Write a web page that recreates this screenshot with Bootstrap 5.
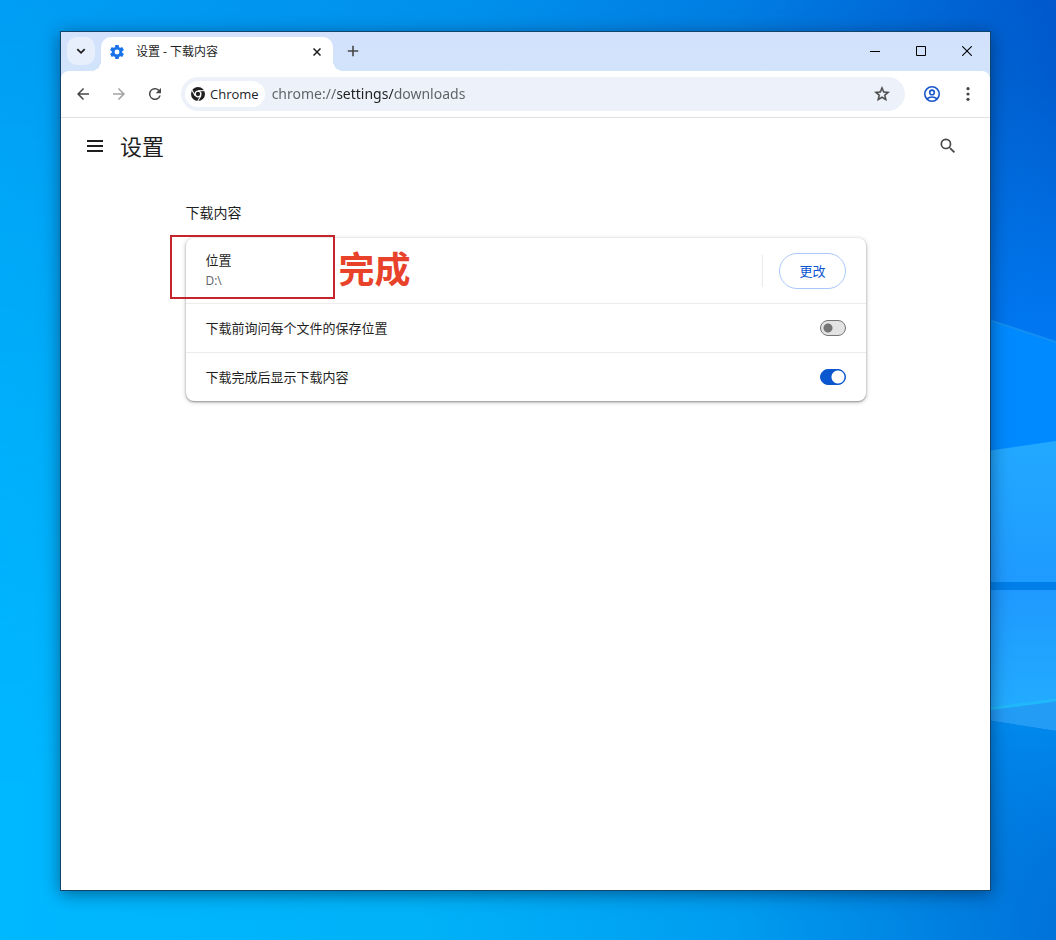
<!DOCTYPE html>
<html lang="zh-CN">
<head>
<meta charset="utf-8">
<meta name="viewport" content="width=device-width, initial-scale=1">
<title>设置 - 下载内容</title>
<link href="https://cdn.jsdelivr.net/npm/bootstrap@5.3.0/dist/css/bootstrap.min.css" rel="stylesheet">
<style>
  body { font-family: "Open Sans", "Noto Sans CJK SC", sans-serif; font-size: 13px; line-height: 20px; color: #1f1f1f; }
  svg { display: block; flex: none; }
  .desktop { padding: 31px 65px 49px 60px; isolation: isolate; }
  .wallpaper { inset: 0; z-index: -1; }
  .app-window { border: 1px solid #10466c; box-shadow: 0 3px 16px rgba(0, 20, 50, .5); }

  .titlebar { height: 39px; padding-left: 6px; background: linear-gradient(#d4e1fc, #d1e4fb); }
  .icon-btn { --bs-btn-padding-x: 0; --bs-btn-padding-y: 0; --bs-btn-border-width: 0; --bs-btn-border-radius: 18px;
    --bs-btn-hover-bg: #e9eef6; display: flex; align-items: center; justify-content: center; flex: none;
    width: 36px; height: 36px; color: #474747; }
  .tab-search { width: 28px; height: 28px; margin: 5px 6px 0 0; border-radius: 10px; background: #e7effd; color: #1f1f1f; }
  .browser-tab { width: 232px; height: 34px; padding: 0 8px 5px 9px; border-radius: 10px 10px 0 0; background: #fff; font-size: 12px; color: #1f1f1f; }
  .browser-tab::before, .browser-tab::after { content: ""; position: absolute; bottom: 0; width: 10px; height: 10px; }
  .browser-tab::before { right: 100%; background: radial-gradient(circle at 0 0, transparent 10px, #fff 10px); }
  .browser-tab::after { left: 100%; background: radial-gradient(circle at 100% 0, transparent 10px, #fff 10px); }
  .tab-close { width: 16px; height: 16px; color: #1f1f1f; }
  .new-tab { width: 28px; height: 28px; margin: 5px 0 0 6px; }
  .caption-btn { width: 46px; height: 38px; border-radius: 0; color: #000; }

  .toolbar-wrap { background: #d1e4fb; }
  .toolbar { height: 47px; padding: 0 4px; border-bottom: 1px solid #dfe1e5; border-radius: 8px 8px 0 0; background: #fff; }
  .omnibox { height: 34px; margin: 0 9px 0 8px; padding: 0 5px 0 4px; border-radius: 17px; background: #edf1f9; }
  .site-chip { height: 26px; padding: 0 6px; border-radius: 13px; background: #fff; font-size: 13px; line-height: 26px; gap: 5px; }
  .omnibox input { border: 0; border-radius: 0; padding: 0; margin-left: 7px; min-width: 0; font-family: "Noto Sans", sans-serif; font-size: 14px; line-height: 24px;
    color: #474747; outline: 0;
    background: linear-gradient(90deg, #5c5f63 66px, #1f1f1f 66px 122px, #5c5f63 122px) text; -webkit-text-fill-color: transparent; }

  .page-head { height: 56px; padding: 0 24px 0 16px; }
  .page-head h1 { font-size: 22px; line-height: 32px; font-weight: 400; margin: 0 0 0 7px; color: #1f1f1f; }
  .settings-col { max-width: 680px; padding-top: 29px; }
  .settings-col h2 { font-size: 14px; line-height: 20px; font-weight: 400; margin: 0 0 15px; }
  .settings-card { border-radius: 8px; background: #fff; box-shadow: 0 1px 2px rgba(60, 64, 67, .5), 0 1px 4px 1px rgba(60, 64, 67, .18); }
  .setting-row { min-height: 49px; padding: 0 20px; border-top: 1px solid #ededed; }
  .setting-row:first-child { min-height: 65px; border-top: 0; }
  .path-text { font-size: 12px; line-height: 22px; color: #5f6368; }
  .row-divider { width: 1px; height: 32px; margin-right: 16px; background: #e8eaed; }
  .change-btn { --bs-btn-color: #0b57d0; --bs-btn-border-color: #a8c7fa; --bs-btn-hover-bg: #f0f5fe; --bs-btn-hover-color: #0b57d0;
    --bs-btn-font-size: 13px; --bs-btn-line-height: 20px; --bs-btn-padding-y: 7px; --bs-btn-padding-x: 19px; }
  .toggle.form-check-input { width: 26px; height: 16px; margin: 0; border: 1px solid #767676; border-radius: 8px;
    background: #e3e3e3 radial-gradient(circle at 7px 7px, #757575 4px, transparent 5px); }
  .toggle.form-check-input:checked { border-color: #0b57d0;
    background: #0b57d0 radial-gradient(circle at 17px 7px, #fff 6px, transparent 7px); }

  .mark-box { left: -16px; top: -3px; width: 165px; height: 64px; border: 2px solid #c4242b; }
  .mark-label { left: 153px; top: 5px; font-size: 36px; line-height: 54px; font-weight: 700; color: #e8432a; }
</style>
</head>
<body>
<div class="desktop position-relative min-vh-100 d-flex">
  <svg class="wallpaper position-absolute w-100 h-100" viewBox="0 0 1056 940" preserveAspectRatio="none" aria-hidden="true">
    <defs>
      <linearGradient id="skyTop"><stop offset="0" stop-color="#009ef4"/><stop offset=".45" stop-color="#0090ec"/><stop offset=".7" stop-color="#007de2"/><stop offset=".88" stop-color="#0067d6"/><stop offset="1" stop-color="#0059cc"/></linearGradient>
      <linearGradient id="skyLow"><stop offset="0" stop-color="#00b8ff"/><stop offset=".4" stop-color="#00b2f8"/><stop offset=".7" stop-color="#009cf0"/><stop offset=".9" stop-color="#007fe0"/><stop offset="1" stop-color="#0072da"/></linearGradient>
      <linearGradient id="fade" x2="0" y2="1"><stop offset="0" stop-color="#000"/><stop offset=".4" stop-color="#999"/><stop offset=".85" stop-color="#fff"/></linearGradient>
      <linearGradient id="glow" x2="0" y2="1"><stop offset="0" stop-color="#0070e8" stop-opacity="0"/><stop offset="1" stop-color="#0078f2"/></linearGradient>
      <linearGradient id="paneA" x2="0" y2="1"><stop offset="0" stop-color="#22a9ff"/><stop offset="1" stop-color="#1f9aff"/></linearGradient>
      <linearGradient id="paneB" x2="0" y2="1"><stop offset="0" stop-color="#1f99ff"/><stop offset="1" stop-color="#22acff"/></linearGradient>
      <linearGradient id="floor" x2="0" y2="1"><stop offset="0" stop-color="#008aee"/><stop offset="1" stop-color="#0074da" stop-opacity="0"/></linearGradient>
      <mask id="lowMask"><rect width="1056" height="940" fill="url(#fade)"/></mask>
    </defs>
    <rect width="1056" height="940" fill="url(#skyTop)"/>
    <rect width="1056" height="940" fill="url(#skyLow)" mask="url(#lowMask)"/>
    <path d="M980 80h76v262l-76-25z" fill="url(#glow)"/>
    <path d="M980 317l76 25v100l-76 10z" fill="#008aff"/>
    <path d="M980 317l76 25" stroke="#128ff4" stroke-width="2"/>
    <path d="M980 452l76-11v141h-76z" fill="url(#paneA)"/>
    <path d="M980 582h76v8h-76z" fill="#007fe8"/>
    <path d="M980 590h76v110l-76 10z" fill="url(#paneB)"/>
    <path d="M980 710l76-10v31l-76-12z" fill="#239cf6"/>
    <path d="M980 710l76-10" stroke="#20b8fb" stroke-width="3"/>
    <path d="M980 719l76 12v209h-76z" fill="url(#floor)"/>
  </svg>

  <main class="app-window flex-fill d-flex flex-column bg-white">
    <div class="titlebar d-flex">
      <button class="btn icon-btn tab-search" aria-label="搜索标签页"><svg width="10" height="10" viewBox="0 0 10 10" fill="none" stroke="currentColor" stroke-width="1.800"><path d="M1.300 3.200 5 6.800l3.700-3.600"/></svg></button>
      <div class="browser-tab position-relative d-flex align-items-center align-self-end">
        <svg width="14" height="14" viewBox="2 2 20 20" fill="#1a73e8"><path d="M19.43 12.98c.04-.32.07-.64.07-.98s-.03-.66-.07-.98l2.11-1.65c.19-.15.24-.42.12-.64l-2-3.460c-.12-.22-.39-.3-.61-.22l-2.490 1c-.52-.4-1.080-.73-1.690-.98l-.38-2.650C14.460 2.180 14.250 2 14 2h-4c-.25 0-.46.18-.49.42l-.38 2.650c-.61.25-1.170.59-1.690.98l-2.490-1c-.23-.09-.49 0-.61.22l-2 3.460c-.13.22-.07.49.12.64l2.110 1.650c-.04.32-.07.65-.07.98s.03.66.07.98l-2.110 1.650c-.19.15-.24.42-.12.64l2 3.460c.12.22.39.3.61.22l2.490-1c.52.4 1.080.73 1.690.98l.38 2.650c.03.24.24.42.49.42h4c.25 0 .46-.18.49-.42l.38-2.650c.61-.25 1.170-.59 1.690-.98l2.490 1c.23.09.49 0 .61-.22l2-3.460c.12-.22.07-.49-.12-.64zM12 15.500A3.500 3.500 0 1 1 12 8.500a3.500 3.500 0 0 1 0 7z"/></svg>
        <span class="flex-fill ms-2 ps-1">设置 - 下载内容</span>
        <button class="btn icon-btn tab-close" aria-label="关闭标签页"><svg width="8" height="8" viewBox="0 0 8 8" stroke="currentColor" stroke-width="1.500"><path d="M.5.5l7 7M7.500.5l-7 7"/></svg></button>
      </div>
      <button class="btn icon-btn new-tab" aria-label="新标签页"><svg width="12" height="12" viewBox="0 0 12 12" stroke="currentColor" stroke-width="1.600"><path d="M6 .8v10.400M.8 6h10.400"/></svg></button>
      <div class="d-flex ms-auto">
        <button class="btn icon-btn caption-btn" aria-label="最小化"><svg width="10" height="10" viewBox="0 0 10 10"><path d="M0 5h10v1H0z"/></svg></button>
        <button class="btn icon-btn caption-btn" aria-label="最大化"><svg width="10" height="10" viewBox="0 0 10 10" fill="none" stroke="#000"><path d="M.5.5h9v9h-9z"/></svg></button>
        <button class="btn icon-btn caption-btn" aria-label="关闭"><svg width="10" height="10" viewBox="0 0 10 10" stroke="#000" stroke-width="1.100"><path d="M.2.2l9.600 9.600M9.800.2.2 9.800"/></svg></button>
      </div>
    </div>

    <div class="toolbar-wrap">
      <nav class="toolbar d-flex align-items-center">
        <button class="btn icon-btn" aria-label="后退"><svg width="18" height="18" viewBox="0 0 24 24" fill="currentColor"><path d="M20 11H7.830l5.590-5.590L12 4l-8 8 8 8 1.410-1.410L7.830 13H20z"/></svg></button>
        <button class="btn icon-btn opacity-50" aria-label="前进"><svg width="18" height="18" viewBox="0 0 24 24" fill="currentColor"><path d="m12 4-1.410 1.410L16.170 11H4v2h12.170l-5.580 5.590L12 20l8-8z"/></svg></button>
        <button class="btn icon-btn" aria-label="重新加载"><svg width="18" height="18" viewBox="0 0 24 24" fill="currentColor"><path d="M17.650 6.350A8 8 0 1 0 19.730 14h-2.080A6 6 0 1 1 12 6c1.660 0 3.140.69 4.220 1.780L13 11h7V4z"/></svg></button>
        <div class="omnibox flex-fill d-flex align-items-center">
          <button class="btn site-chip d-flex align-items-center border-0" type="button">
            <svg width="14" height="14" viewBox="0 0 24 24"><circle cx="12" cy="12" r="12" fill="#1f1f1f"/><g stroke="#fff" stroke-width="1.800" fill="none"><path d="M12 6.300h11"/><path d="M12 6.300h11" transform="rotate(120 12 12)"/><path d="M12 6.300h11" transform="rotate(240 12 12)"/></g><circle cx="12" cy="12" r="4.900" fill="#1f1f1f" stroke="#fff" stroke-width="2.400"/></svg>
            <span>Chrome</span>
          </button>
          <input class="flex-fill" type="text" value="chrome://settings/downloads" aria-label="地址和搜索栏">
          <button class="btn icon-btn" aria-label="为此标签页添加书签"><svg width="18" height="18" viewBox="0 0 24 24" fill="currentColor" stroke="currentColor" stroke-width=".5"><path d="m22 9.240-7.190-.62L12 2 9.190 8.630 2 9.240l5.460 4.730L5.820 21 12 17.270 18.180 21l-1.630-7.030zM12 15.400l-3.760 2.270 1-4.280-3.320-2.880 4.380-.38L12 6.100l1.710 4.040 4.380.38-3.320 2.880 1 4.280z"/></svg></button>
        </div>
        <button class="btn icon-btn" aria-label="个人资料"><svg width="18" height="18" viewBox="0 0 18 18" fill="none" stroke="#1a56c8" stroke-width="1.600"><circle cx="9" cy="9" r="7.200"/><circle cx="9" cy="7.400" r="2.300"/><path d="M3.800 13.800c3-2.300 7.400-2.300 10.400 0"/></svg></button>
        <button class="btn icon-btn" aria-label="更多"><svg width="4" height="14" viewBox="0 0 4 14" fill="currentColor"><circle cx="2" cy="1.700" r="1.600"/><circle cx="2" cy="7" r="1.600"/><circle cx="2" cy="12.300" r="1.600"/></svg></button>
      </nav>
    </div>

    <header class="page-head d-flex align-items-center">
      <button class="btn icon-btn" aria-label="主菜单"><svg width="16" height="12" viewBox="0 0 16 12" fill="#1f1f1f"><path d="M0 0h16v2H0zM0 5h16v2H0zM0 10h16v2H0z"/></svg></button>
      <h1>设置</h1>
      <button class="btn icon-btn ms-auto" aria-label="搜索设置"><svg width="20" height="20" viewBox="0 0 24 24" fill="currentColor"><path d="M15.500 14h-.79l-.28-.27A6.470 6.470 0 0 0 16 9.500 6.500 6.500 0 1 0 9.500 16c1.610 0 3.090-.59 4.230-1.570l.27.28v.79l5 4.990L20.490 19zm-6 0a4.500 4.500 0 1 1 0-9 4.500 4.500 0 0 1 0 9z"/></svg></button>
    </header>

    <section class="settings-col w-100 mx-auto">
      <h2>下载内容</h2>
      <div class="settings-card position-relative">
        <div class="setting-row d-flex align-items-center">
          <div class="flex-fill"><div>位置</div><div class="path-text">D:\</div></div>
          <span class="row-divider"></span>
          <button class="btn change-btn rounded-pill">更改</button>
        </div>
        <div class="setting-row d-flex align-items-center">
          <label class="flex-fill" for="ask">下载前询问每个文件的保存位置</label>
          <input class="form-check-input toggle" type="checkbox" role="switch" id="ask">
        </div>
        <div class="setting-row d-flex align-items-center">
          <label class="flex-fill" for="show">下载完成后显示下载内容</label>
          <input class="form-check-input toggle" type="checkbox" role="switch" id="show" checked>
        </div>
        <div class="mark-box position-absolute pe-none"></div>
        <div class="mark-label position-absolute pe-none">完成</div>
      </div>
    </section>
  </main>
</div>
<script src="https://cdn.jsdelivr.net/npm/bootstrap@5.3.0/dist/js/bootstrap.bundle.min.js"></script>
</body>
</html>
